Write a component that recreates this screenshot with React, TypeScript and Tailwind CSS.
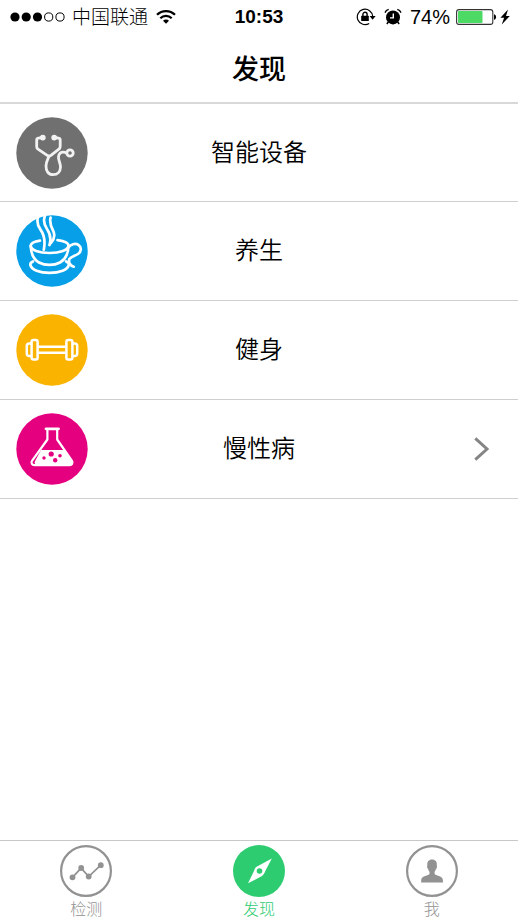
import React, { useState } from 'react';

type IconProps = { className?: string };

const SignalDots: React.FC = () => (
    <svg viewBox="0 0 56 12" className="w-14 h-3" aria-hidden="true">
        <circle cx="5" cy="6" r="4.6" fill="#000" />
        <circle cx="16.2" cy="6" r="4.6" fill="#000" />
        <circle cx="27.5" cy="6" r="4.6" fill="#000" />
        <circle cx="38.7" cy="6" r="4.1" fill="none" stroke="#000" />
        <circle cx="50" cy="6" r="4.1" fill="none" stroke="#000" />
    </svg>
);

const WifiIcon: React.FC = () => (
    <svg viewBox="0 0 20 16" className="w-5 h-4" fill="none" stroke="#000" aria-hidden="true">
        <path d="M1 5.7C6 .8 14 .8 19 5.7" strokeWidth="2.3" />
        <path d="M4.3 9.2c3.2-3.2 8.2-3.2 11.4 0" strokeWidth="2.2" />
        <path d="M7 11.7c1.8-1.6 4.2-1.6 6 0l-3 3.1z" fill="#000" stroke="none" />
    </svg>
);

const RotationLockIcon: React.FC = () => (
    <svg viewBox="0 0 20 18" className="w-5 h-[18px]" fill="none" stroke="#000" aria-hidden="true">
        <path d="M13.2 15.4A7.7 7.7 0 1 1 16.7 8.4" strokeWidth="1.2" />
        <path d="M13.6 8h6l-3 3.8z" fill="#000" stroke="none" />
        <rect x="5.2" y="7.7" width="7.6" height="5.4" rx=".5" fill="#000" stroke="none" />
        <path d="M6.9 8V6.4a2.1 2.1 0 0 1 4.2 0V8" strokeWidth="1.4" />
    </svg>
);

const AlarmIcon: React.FC = () => (
    <svg viewBox="0 0 18 18" className="w-[18px] h-[18px]" fill="none" stroke="#000" aria-hidden="true">
        <circle cx="9" cy="9.4" r="7" fill="#000" stroke="none" />
        <path d="M1 4.6C1.7 3 3 1.9 4.7 1.4M17 4.6c-.7-1.6-2-2.7-3.7-3.2" strokeWidth="1.4" />
        <path d="M4.2 14l-1.3 2M13.8 14l1.3 2" strokeWidth="1.5" />
        <path d="M9.3 5.4v4.5H6" stroke="#fff" strokeWidth="1.4" />
    </svg>
);

const BatteryIcon: React.FC = () => (
    <svg viewBox="0 0 42 16" className="w-[42px] h-4" aria-hidden="true">
        <rect x=".6" y=".6" width="36.2" height="14.8" rx="2.4" fill="#fff" stroke="#333" strokeWidth="1.1" />
        <rect x="2" y="2" width="24.5" height="12" rx="1" fill="#4cd964" />
        <path d="M38 5.2c2.8.6 2.8 5 0 5.6z" fill="#000" />
    </svg>
);

const BoltIcon: React.FC = () => (
    <svg viewBox="0 0 10 16" className="w-2.5 h-4" aria-hidden="true">
        <path d="M8 .6L.4 8.8h3.7L1.8 15.4 9.8 7H6z" fill="#000" />
    </svg>
);

const StethoscopeIcon: React.FC<IconProps> = ({ className }) => (
    <svg viewBox="0 0 72 72" className={className} fill="none" stroke="#f2f2f2" strokeWidth="2.8" strokeLinecap="round" strokeLinejoin="round" aria-hidden="true">
        <circle cx="36" cy="36" r="35.7" fill="#707070" stroke="none" />
        <path d="M26.5 20.5l-4.2.7c-1 .2-1.6.9-1.6 1.9v6.6c0 1 .4 1.9 1.3 2.5l9.2 6.2c1.2.8 2.6.8 3.7 0l8-6.2c.9-.7 1.3-1.5 1.3-2.6v-6.500c0-1-.6-1.700-1.600-1.900l-4.200-.7" />
        <circle cx="26.8" cy="20.6" r="1.5" fill="#f2f2f2" />
        <circle cx="38.2" cy="20.6" r="1.5" fill="#f2f2f2" />
        <path d="M33 39.2c-1.300 3.200-3 5.700-3 9.800 0 5.200 2.500 8.700 7 8.700s7.500-3.200 7.500-8c0-3.600-2.300-6.300-2-9.800.3-3.400 2.600-5 5-4.800 1.300.1 2.300.5 3.300.9" />
        <circle cx="54" cy="36" r="3.2" />
    </svg>
);

const TeaCupIcon: React.FC<IconProps> = ({ className }) => (
    <svg viewBox="0 0 72 72" className={className} fill="none" stroke="#fff" strokeWidth="2.7" strokeLinecap="round" strokeLinejoin="round" aria-hidden="true">
        <circle cx="36" cy="36" r="35.7" fill="#069fe8" stroke="none" />
        <path d="M24 25.6c-6 .9-9.3 2.900-9.300 5.200 0 4.300 8.300 7.200 18.800 7.200s19-2.900 19-7.200c0-2.800-4-4.800-11-5.600" />
        <path d="M14.700 31c.3 8 3.300 13.700 8.300 16.500 6 3.200 15 3.200 21 0 5-2.800 8.200-8.500 8.500-16.500" />
        <path d="M17 46.500c-2.200 1-3 2.300-2.600 3.700 1.200 4.600 9 7.600 19.200 7.600s18-3 19.200-7.600c.4-1.400-.5-2.700-2.700-3.700" />
        <path d="M51.800 33c3-3.900 7.400-5.200 10.600-3.200 3.500 2.300 3.100 6.800-.4 9.200-2.600 1.800-7.200 2.400-8.600 5-1.200 2.900.6 6.800 4.400 7.700" />
        <path d="M22.600.8c-2.300 5.200-1 9.800 1.900 13.800 3.300 4.500 5.300 10 3.300 20.200M28.900 1c-1.900 5.200-.6 9.300 2.200 13.300 3.200 4.500 4.400 9 2.400 15.700M34.600 2.500c-1.300 5.500.3 9.200 2.400 13 2 3.700 1.400 8.500-2 12.500" />
    </svg>
);

const DumbbellIcon: React.FC<IconProps> = ({ className }) => (
    <svg viewBox="0 0 72 72" className={className} fill="none" stroke="#fff" strokeWidth="2.5" strokeLinejoin="round" aria-hidden="true">
        <circle cx="36" cy="36" r="35.7" fill="#fab400" stroke="none" />
        <path d="M21.700 32.700h28.600M21.700 38.800h28.600" />
        <rect x="15.600" y="26" width="6" height="19.500" rx="1.800" />
        <rect x="50.400" y="26" width="6" height="19.500" rx="1.800" />
        <path d="M15.600 29.500h-2.200c-1.600 0-2.600 1-2.600 2.500v7.500c0 1.500 1 2.500 2.600 2.500h2.200M56.400 29.500h2.200c1.600 0 2.600 1 2.600 2.500v7.500c0 1.500-1 2.500-2.600 2.500h-2.200" />
    </svg>
);

const FlaskIcon: React.FC<IconProps> = ({ className }) => (
    <svg viewBox="0 0 72 72" className={className} fill="none" stroke="#fff" strokeWidth="2.2" strokeLinecap="round" strokeLinejoin="round" aria-hidden="true">
        <circle cx="36" cy="36" r="35.7" fill="#e5007f" stroke="none" />
        <path d="M30 15.800h12.500" strokeWidth="2.800" />
        <path d="M31.400 16v10.500L16 47.800c-1.300 2.200 0 4.400 2.300 4.400h35.400c2.300 0 3.600-2.200 2.300-4.400L41.200 26.500V16" />
        <path d="M25 37h23l8 11.200c.8 1.600 0 3-1.600 3H20.500c-1.700 0-2.400-1.500-1.500-3z" fill="#fff" stroke="none" />
        <g fill="#e5007f" stroke="none">
            <circle cx="35.200" cy="41" r="2.600" />
            <circle cx="28" cy="45" r="1.700" />
            <circle cx="39.200" cy="47.300" r="2.200" />
            <circle cx="44" cy="42.700" r="1.800" />
        </g>
    </svg>
);

const ChevronIcon: React.FC<IconProps> = ({ className }) => (
    <svg viewBox="0 0 16 24" className={className} fill="none" stroke="#858585" strokeWidth="3" aria-hidden="true">
        <path d="M1.300 1.300L13 12 1.300 22.700" />
    </svg>
);

const ChartTabIcon: React.FC<IconProps> = ({ className }) => (
    <svg viewBox="0 0 52 52" className={className} fill="none" stroke="currentColor" aria-hidden="true">
        <circle cx="26" cy="26" r="24.9" strokeWidth="2.2" />
        <path d="M12.500 32.300l8.600-9.200 7.600 8.500 12-11.400" strokeWidth="1.700" />
        <g fill="currentColor" stroke="none">
            <circle cx="12.5" cy="32.300" r="2.900" />
            <circle cx="21.200" cy="23" r="2.900" />
            <circle cx="28.700" cy="31.500" r="2.900" />
            <circle cx="40.800" cy="20.200" r="2.900" />
        </g>
    </svg>
);

const CompassTabIcon: React.FC<IconProps> = ({ className }) => (
    <svg viewBox="0 0 52 52" className={className} aria-hidden="true">
        <circle cx="26" cy="26" r="26" fill="#2ecc71" />
        <path d="M38.800 13.400L31.500 27.500 29 31 15 38.300 21.500 25l3.500-4z" fill="#fff" />
        <circle cx="26.500" cy="26" r="4" fill="#2ecc71" stroke="#fff" strokeWidth="2.400" />
    </svg>
);

const PersonTabIcon: React.FC<IconProps> = ({ className }) => (
    <svg viewBox="0 0 52 52" className={className} fill="none" stroke="currentColor" aria-hidden="true">
        <circle cx="26" cy="26" r="24.9" strokeWidth="2.2" />
        <path
            d="M26 14.500c-3.300 0-5 2.300-4.700 5.700.1.500-.3.900-.2 1.700.2 1.200.6 1.700 1 2 .3 1.300.8 2.200 1.400 2.800v2.300c-.8 1.600-7.800 1.800-8.200 5.600l-.2 2.900h22l-.3-2.900c-.5-3.800-7.300-4-8.200-5.600v-2.300c.7-.7 1.100-1.600 1.400-2.800.4-.3.800-.8 1-2 .1-.8-.2-1.200-.2-1.700.4-3.500-1.400-5.700-4.800-5.700z"
            fill="currentColor"
            stroke="none"
        />
    </svg>
);

const categories = [
    { name: '智能设备', Icon: StethoscopeIcon, hasMore: false },
    { name: '养生', Icon: TeaCupIcon, hasMore: false },
    { name: '健身', Icon: DumbbellIcon, hasMore: false },
    { name: '慢性病', Icon: FlaskIcon, hasMore: true },
];

const tabs = [
    { name: '检测', Icon: ChartTabIcon },
    { name: '发现', Icon: CompassTabIcon },
    { name: '我', Icon: PersonTabIcon },
];

const App: React.FC = () => {
    const [activeTab, setActiveTab] = useState('发现');

    return (
        <div className="min-h-screen bg-white flex flex-col text-black font-['Liberation_Sans','Noto_Sans_CJK_SC',sans-serif]">
            {/* Status bar */}
            <div className="grid grid-cols-[1fr_auto_1fr] items-center h-[33px] px-2 text-[19px] leading-6">
                <div className="flex items-center pl-0.5">
                    <SignalDots />
                    <span className="ml-1.5 mr-2 pt-0.5 font-light">中国联通</span>
                    <WifiIcon />
                </div>
                <span className="font-bold">10:53</span>
                <div className="flex items-center justify-end">
                    <RotationLockIcon />
                    <span className="ml-2 mr-2">
                        <AlarmIcon />
                    </span>
                    <span className="text-[20px] mr-1.5">74%</span>
                    <BatteryIcon />
                    <span className="ml-0.5">
                        <BoltIcon />
                    </span>
                </div>
            </div>

            <header className="flex items-center justify-center h-[71px] pt-1 border-b-2 border-[#d8d8d8]">
                <h1 className="text-[27px] leading-8 font-medium">发现</h1>
            </header>

            <main className="flex-1">
                <ul>
                    {categories.map(({ name, Icon, hasMore }) => (
                        <li key={name} className="h-[99px] first:h-[98px] border-b border-[#cfcfcf]">
                            <button type="button" className="w-full h-full px-4 grid grid-cols-[72px_1fr_72px] items-center text-2xl font-[350]">
                                <Icon className="w-[72px] h-[72px]" />
                                <span>{name}</span>
                                {hasMore && <ChevronIcon className="w-4 h-6 justify-self-end mr-3" />}
                            </button>
                        </li>
                    ))}
                </ul>
            </main>

            {/* Tab bar */}
            <nav className="grid grid-cols-3 h-20 border-t border-[#c8c8c8]">
                {tabs.map(({ name, Icon }) => (
                    <button
                        key={name}
                        type="button"
                        onClick={() => setActiveTab(name)}
                        className={`flex flex-col items-center pt-1 text-base leading-[26px] font-light ${activeTab === name ? 'text-[#2ecc71]' : 'text-[#929292]'}`}
                    >
                        <Icon className="w-[52px] h-[52px]" />
                        <span>{name}</span>
                    </button>
                ))}
            </nav>
        </div>
    );
};

export default App;
